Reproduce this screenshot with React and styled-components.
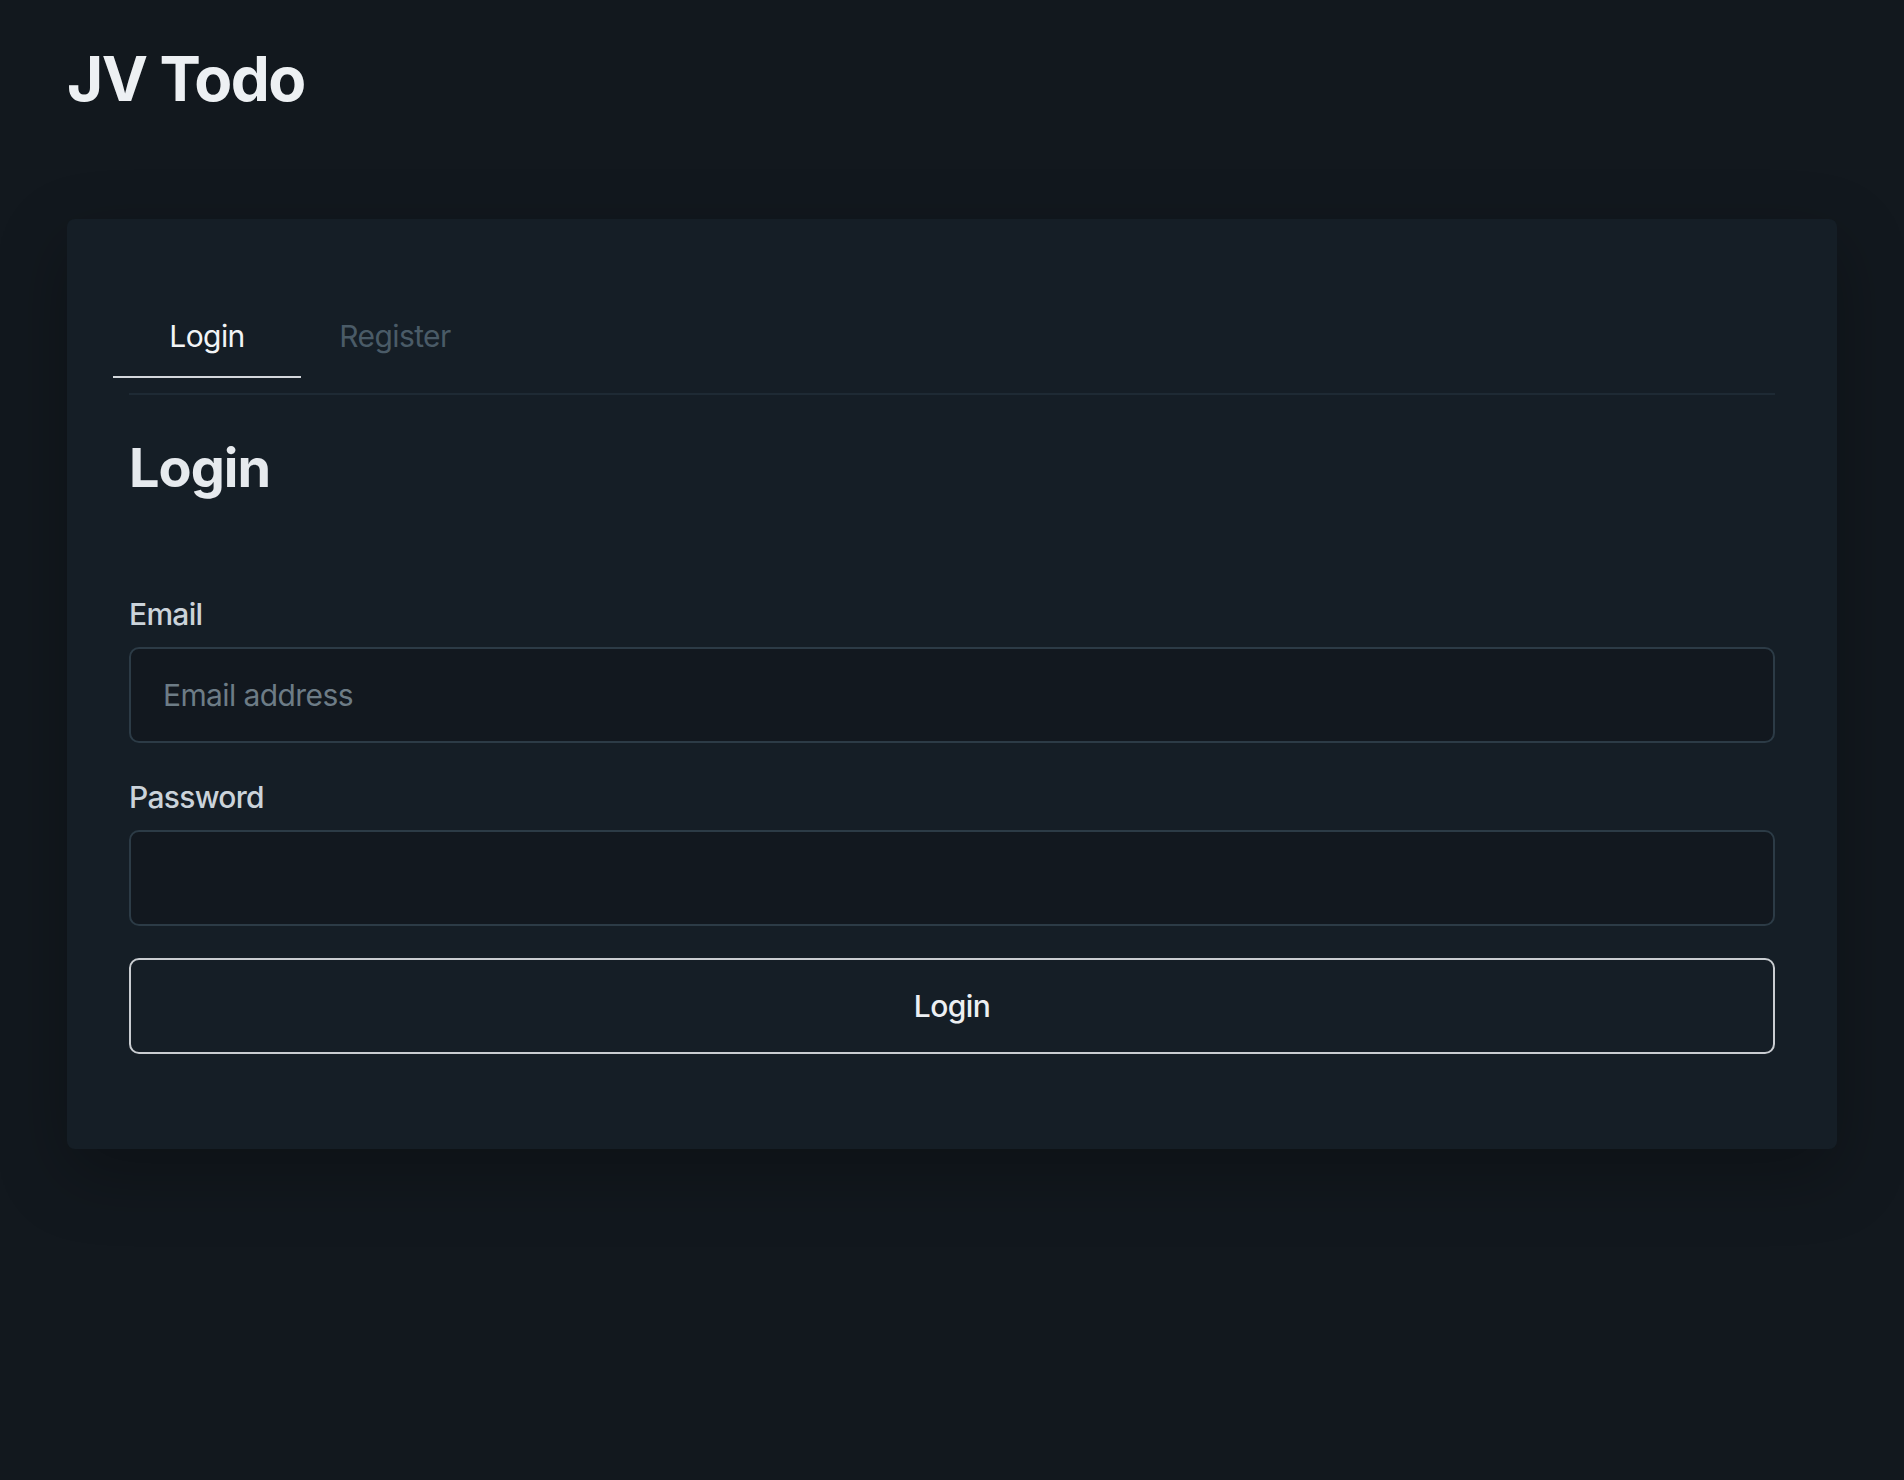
import styled, { createGlobalStyle } from "styled-components";

const FONT = `Inter, "Liberation Sans", Arial, sans-serif`;

const GlobalStyle = createGlobalStyle`
    * {
        box-sizing: border-box;
    }

    body {
        margin: 0;
        background: #12181e;
        font-family: ${FONT};
        -webkit-font-smoothing: antialiased;
    }
`;

const Page = styled.div`
    min-height: 1480px;
    padding: 42px 67px 0;
`;

const Brand = styled.h1`
    margin: 0;
    font-size: 62px;
    line-height: 74px;
    font-weight: 700;
    letter-spacing: -1.6px;
    color: #edf0f3;
`;

const Card = styled.section`
    margin-top: 103px;
    height: 930px;
    padding: 69px 62px 0;
    background: #151e26;
    border-radius: 8px;
    box-shadow: 0 24px 70px rgba(0, 0, 0, 0.28);
`;

const TabList = styled.div`
    display: flex;
    margin-left: -16px;
`;

const Tab = styled.button`
    width: 188px;
    padding: 24px 0 16px;
    border: none;
    border-bottom: 2px solid ${({ $active }) => ($active ? "#d3d7db" : "transparent")};
    background: transparent;
    font-family: ${FONT};
    font-size: 30px;
    line-height: 48px;
    letter-spacing: -0.6px;
    font-weight: 400;
    color: ${({ $active }) => ($active ? "#f2f4f6" : "#4a5b67")};
    cursor: pointer;
`;

const Divider = styled.div`
    height: 2px;
    margin-top: 15px;
    background: #1e2a34;
`;

const Heading = styled.h2`
    margin: 40px 0 0;
    font-size: 54px;
    line-height: 65px;
    font-weight: 700;
    letter-spacing: -1px;
    color: #e6eaee;
`;

const Form = styled.form`
    display: flex;
    flex-direction: column;
    margin-top: 90px;
`;

const Label = styled.label`
    display: block;
    font-size: 30px;
    line-height: 48px;
    letter-spacing: -0.7px;
    font-weight: 500;
    color: #cbd3da;
`;

const Input = styled.input`
    display: block;
    width: 100%;
    height: 96px;
    margin: 9px 0 ${({ $last }) => ($last ? "32px" : "30px")};
    padding: 0 32px;
    border: 2px solid #2c3b46;
    border-radius: 10px;
    background: #12181f;
    font-family: ${FONT};
    font-size: 30px;
    letter-spacing: -0.6px;
    color: #e6eaee;
    outline: none;

    &::placeholder {
        color: #6d7c86;
    }
`;

const Button = styled.button`
    width: 100%;
    height: 96px;
    border: 2px solid #c9cdd1;
    border-radius: 10px;
    background: transparent;
    font-family: ${FONT};
    font-size: 30px;
    letter-spacing: -0.6px;
    font-weight: 500;
    color: #eceff2;
    cursor: pointer;
`;

const App = () => {
    return (
        <>
            <GlobalStyle />
            <Page>
                <Brand>JV Todo</Brand>
                <Card>
                    <TabList>
                        <Tab $active>Login</Tab>
                        <Tab>Register</Tab>
                    </TabList>
                    <Divider />
                    <Heading>Login</Heading>
                    <Form onSubmit={(e) => e.preventDefault()}>
                        <Label htmlFor="email">Email</Label>
                        <Input id="email" type="email" placeholder="Email address" />
                        <Label htmlFor="password">Password</Label>
                        <Input id="password" type="password" $last />
                        <Button type="submit">Login</Button>
                    </Form>
                </Card>
            </Page>
        </>
    );
};

export default App;
